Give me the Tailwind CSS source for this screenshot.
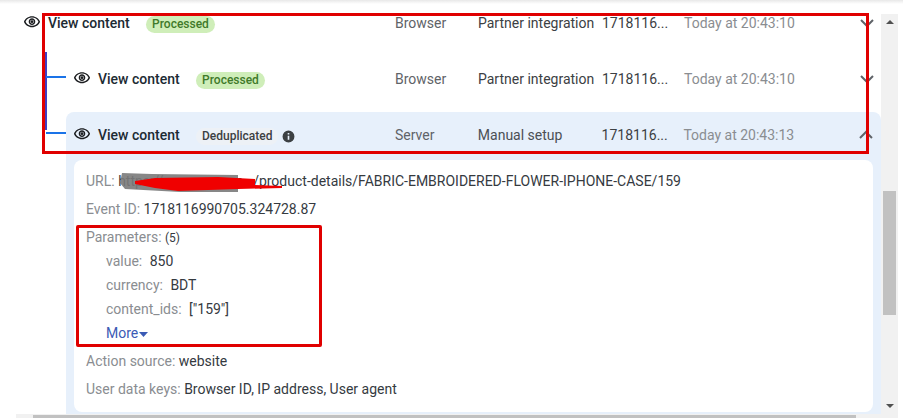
<!DOCTYPE html>
<html lang="en">
<head>
  <meta charset="UTF-8">
  <title>Test events</title>
  <script src="https://cdn.jsdelivr.net/npm/@tailwindcss/browser@4"></script>
</head>
<body class="bg-white font-['Roboto',sans-serif] text-sm text-[#3c4043] overflow-hidden">

<div class="relative w-[903px] h-[418px] overflow-hidden flex">
  <!-- top shadow of the page header -->
  <div class="absolute top-0 left-0 w-full h-1 bg-gradient-to-b from-[#e8e8e8] to-white"></div>

  <div class="w-[881px] shrink-0">
    <!-- parent event -->
    <div class="flex items-center h-[46px] pl-6">
      <div class="w-[371px] flex items-center gap-2 shrink-0">
        <svg class="w-4 h-4 shrink-0 -translate-y-[1px] scale-110" viewBox="0 0 24 24" fill="#1c1e21"><path d="M12 6c3.79 0 7.17 2.13 8.82 5.5C19.17 14.87 15.79 17 12 17s-7.17-2.13-8.82-5.5C4.830 8.130 8.210 6 12 6m0-2C7 4 2.730 7.110 1 11.500 2.730 15.890 7 19 12 19s9.270-3.110 11-7.500C21.270 7.110 17 4 12 4zm0 5c1.380 0 2.500 1.120 2.500 2.500S13.380 14 12 14s-2.500-1.120-2.500-2.500S10.620 9 12 9m0-2c-2.480 0-4.500 2.020-4.500 4.500S9.520 16 12 16s4.500-2.020 4.500-4.500S14.480 7 12 7z"/><circle cx="12" cy="11.500" r="2"/></svg>
        <span class="w-[90px] font-medium text-[#1c2b33]">View content</span>
        <span class="h-[17px] w-[69px] translate-y-[1px] rounded-full bg-[#cfeeb9] text-[#3f7a2a] text-xs font-medium flex items-center justify-center">Processed</span>
      </div>
      <span class="w-[83px] text-[#5f6368]">Browser</span>
      <span class="w-[124px]">Partner integration</span>
      <span class="w-[82px]">1718116...</span>
      <span class="w-[176px] text-[#8a8d91]">Today at 20:43:10</span>
      <svg class="w-3.5 h-3.5" viewBox="0 0 14 14" fill="none" stroke="#5f6368" stroke-width="2"><path d="M1 4l6 6 6-6"/></svg>
    </div>

    <!-- child events -->
    <div class="relative ml-[66px] mt-[10px]">
      <div class="absolute left-[-21px] top-[-4px] w-[1.500px] h-[78px] bg-[#3f3fc0]"></div>
      <div class="absolute left-[-20px] top-[20px] w-5 h-[1.500px] bg-[#1a73e8]"></div>
      <div class="absolute left-[-20px] top-[76px] w-5 h-[1.500px] bg-[#1a73e8]"></div>

      <div class="flex items-center h-[56px] pl-2 pb-[10px]">
        <div class="w-[321px] flex items-center gap-2 shrink-0">
          <svg class="w-4 h-4 shrink-0 -translate-y-[1px] scale-110" viewBox="0 0 24 24" fill="#1c1e21"><path d="M12 6c3.79 0 7.17 2.13 8.82 5.5C19.17 14.87 15.79 17 12 17s-7.17-2.13-8.82-5.5C4.830 8.130 8.210 6 12 6m0-2C7 4 2.730 7.110 1 11.500 2.730 15.890 7 19 12 19s9.270-3.110 11-7.500C21.270 7.110 17 4 12 4zm0 5c1.380 0 2.500 1.120 2.500 2.500S13.380 14 12 14s-2.500-1.120-2.500-2.500S10.620 9 12 9m0-2c-2.480 0-4.500 2.020-4.500 4.500S9.520 16 12 16s4.500-2.020 4.500-4.500S14.480 7 12 7z"/><circle cx="12" cy="11.500" r="2"/></svg>
          <span class="w-[90px] font-medium text-[#1c2b33]">View content</span>
          <span class="h-[17px] w-[69px] translate-y-[1px] rounded-full bg-[#cfeeb9] text-[#3f7a2a] text-xs font-medium flex items-center justify-center">Processed</span>
        </div>
        <span class="w-[83px] text-[#5f6368]">Browser</span>
        <span class="w-[124px]">Partner integration</span>
        <span class="w-[82px]">1718116...</span>
        <span class="w-[176px] text-[#8a8d91]">Today at 20:43:10</span>
        <svg class="w-3.5 h-3.5" viewBox="0 0 14 14" fill="none" stroke="#5f6368" stroke-width="2"><path d="M1 4l6 6 6-6"/></svg>
      </div>

      <!-- expanded event -->
      <div class="bg-[#e7f0fb] rounded-t-lg w-[815px] h-[302px] px-2">
        <div class="flex items-center h-[46px] mb-[2px]">
          <div class="w-[321px] flex items-center gap-2 shrink-0">
            <svg class="w-4 h-4 shrink-0 -translate-y-[1px] scale-110" viewBox="0 0 24 24" fill="#1c1e21"><path d="M12 6c3.79 0 7.17 2.13 8.82 5.5C19.17 14.87 15.79 17 12 17s-7.17-2.13-8.82-5.5C4.830 8.130 8.210 6 12 6m0-2C7 4 2.730 7.110 1 11.500 2.730 15.890 7 19 12 19s9.270-3.110 11-7.500C21.270 7.110 17 4 12 4zm0 5c1.380 0 2.500 1.120 2.500 2.500S13.380 14 12 14s-2.500-1.120-2.500-2.500S10.620 9 12 9m0-2c-2.480 0-4.500 2.020-4.500 4.500S9.520 16 12 16s4.500-2.020 4.500-4.500S14.480 7 12 7z"/><circle cx="12" cy="11.500" r="2"/></svg>
            <span class="w-[90px] font-medium text-[#1c2b33]">View content</span>
            <span class="flex items-center gap-[4px] translate-y-[1px] text-xs font-medium text-[#3c4043]">
              <span class="h-[17px] px-[6px] rounded-full bg-[#edf1f6] flex items-center">Deduplicated</span>
              <svg class="w-[13px] h-[13px]" viewBox="0 0 24 24" fill="#3c4043"><path d="M12 1a11 11 0 100 22 11 11 0 000-22zm1.500 17h-3v-7.500h3V18zm0-9.500h-3v-3h3v3z"/></svg>
            </span>
          </div>
          <span class="w-[83px] text-[#5f6368]">Server</span>
          <span class="w-[124px] text-[#4b4f54]">Manual setup</span>
          <span class="w-[82px]">1718116...</span>
          <span class="w-[176px] text-[#8a8d91]">Today at 20:43:13</span>
          <svg class="w-3.5 h-3.5" viewBox="0 0 14 14" fill="none" stroke="#5f6368" stroke-width="2"><path d="M1 10l6-6 6 6"/></svg>
        </div>

        <div class="bg-white rounded-lg w-[799px] h-[252px] px-3 pt-[11px] text-[#353a3f]">
          <div class="relative h-5 leading-5">
            <span class="text-[#8a8d91]">URL:</span> <span class="inline-block w-[135px]">https://xxxxxxx.com</span><span>/product-details/FABRIC-EMBROIDERED-FLOWER-IPHONE-CASE/159</span>
            <!-- scribbled out domain -->
            <svg class="absolute left-[32px] top-[-1px] w-[170px] h-6" viewBox="0 0 170 24">
              <path d="M4 3l30 1 86 1v17l-58 0-55-3-5-6z" fill="#7a7a7a" fill-opacity="0.9"/>
              <path d="M17 11l20-3 63-1 37 2v6l27 1v2l-44 1-60 2-23-3-20-4z" fill="#f00000"/>
            </svg>
          </div>
          <div class="h-5 leading-5 mt-2"><span class="text-[#8a8d91]">Event ID:</span> 1718116990705.324728.87</div>
          <div class="h-5 leading-5 mt-2"><span class="text-[#8a8d91]">Parameters:</span> <span class="text-xs">(5)</span></div>
          <div class="pl-5">
            <div class="h-5 leading-5 mt-1"><span class="text-[#8a8d91] mr-[4px]">value:</span> 850</div>
            <div class="h-5 leading-5 mt-1"><span class="text-[#8a8d91] mr-[4px]">currency:</span> BDT</div>
            <div class="h-5 leading-5 mt-1"><span class="text-[#8a8d91] mr-[4px]">content_ids:</span> ["159"]</div>
            <div class="h-5 leading-5 mt-1 text-[#3b5bb5] flex items-center">More
              <svg class="w-[9px] h-[5px] ml-[1px] mt-[2px]" viewBox="0 0 9 5" fill="#3b5bb5"><path d="M0 0h9L4.500 5z"/></svg>
            </div>
          </div>
          <div class="h-5 leading-5 mt-2"><span class="text-[#8a8d91]">Action source:</span> website</div>
          <div class="h-5 leading-5 mt-2"><span class="text-[#8a8d91]">User data keys:</span> Browser ID, IP address, User agent</div>
        </div>
      </div>
    </div>
  </div>

  <!-- vertical scrollbar -->
  <div class="w-[17px] h-[400px] mt-[14px] bg-[#f1f1f1] flex flex-col items-center justify-between relative shrink-0">
    <div class="w-0 h-0 mt-[6px] border-x-[4px] border-x-transparent border-b-[4px] border-b-[#505050]"></div>
    <div class="absolute left-[2px] top-[177px] w-[13px] h-[124px] bg-[#c1c1c1]"></div>
    <div class="w-0 h-0 mb-[6px] border-x-[4px] border-x-transparent border-t-[4px] border-t-[#505050]"></div>
  </div>

  <!-- horizontal scrollbar -->
  <div class="absolute left-[16px] top-[414px] w-[882px] h-[4px] bg-[#f1f1f1]">
    <div class="ml-[17px] mt-[1px] w-[823px] h-[3px] bg-[#c1c1c1]"></div>
  </div>

  <!-- red annotation boxes -->
  <div class="absolute left-[42px] top-[13px] w-[827px] h-[141px] border-[3px] border-[#e00000]"></div>
  <div class="absolute left-[76px] top-[225px] w-[246px] h-[122px] border-[3px] border-[#e00000] rounded-[2px]"></div>
</div>

</body>
</html>
